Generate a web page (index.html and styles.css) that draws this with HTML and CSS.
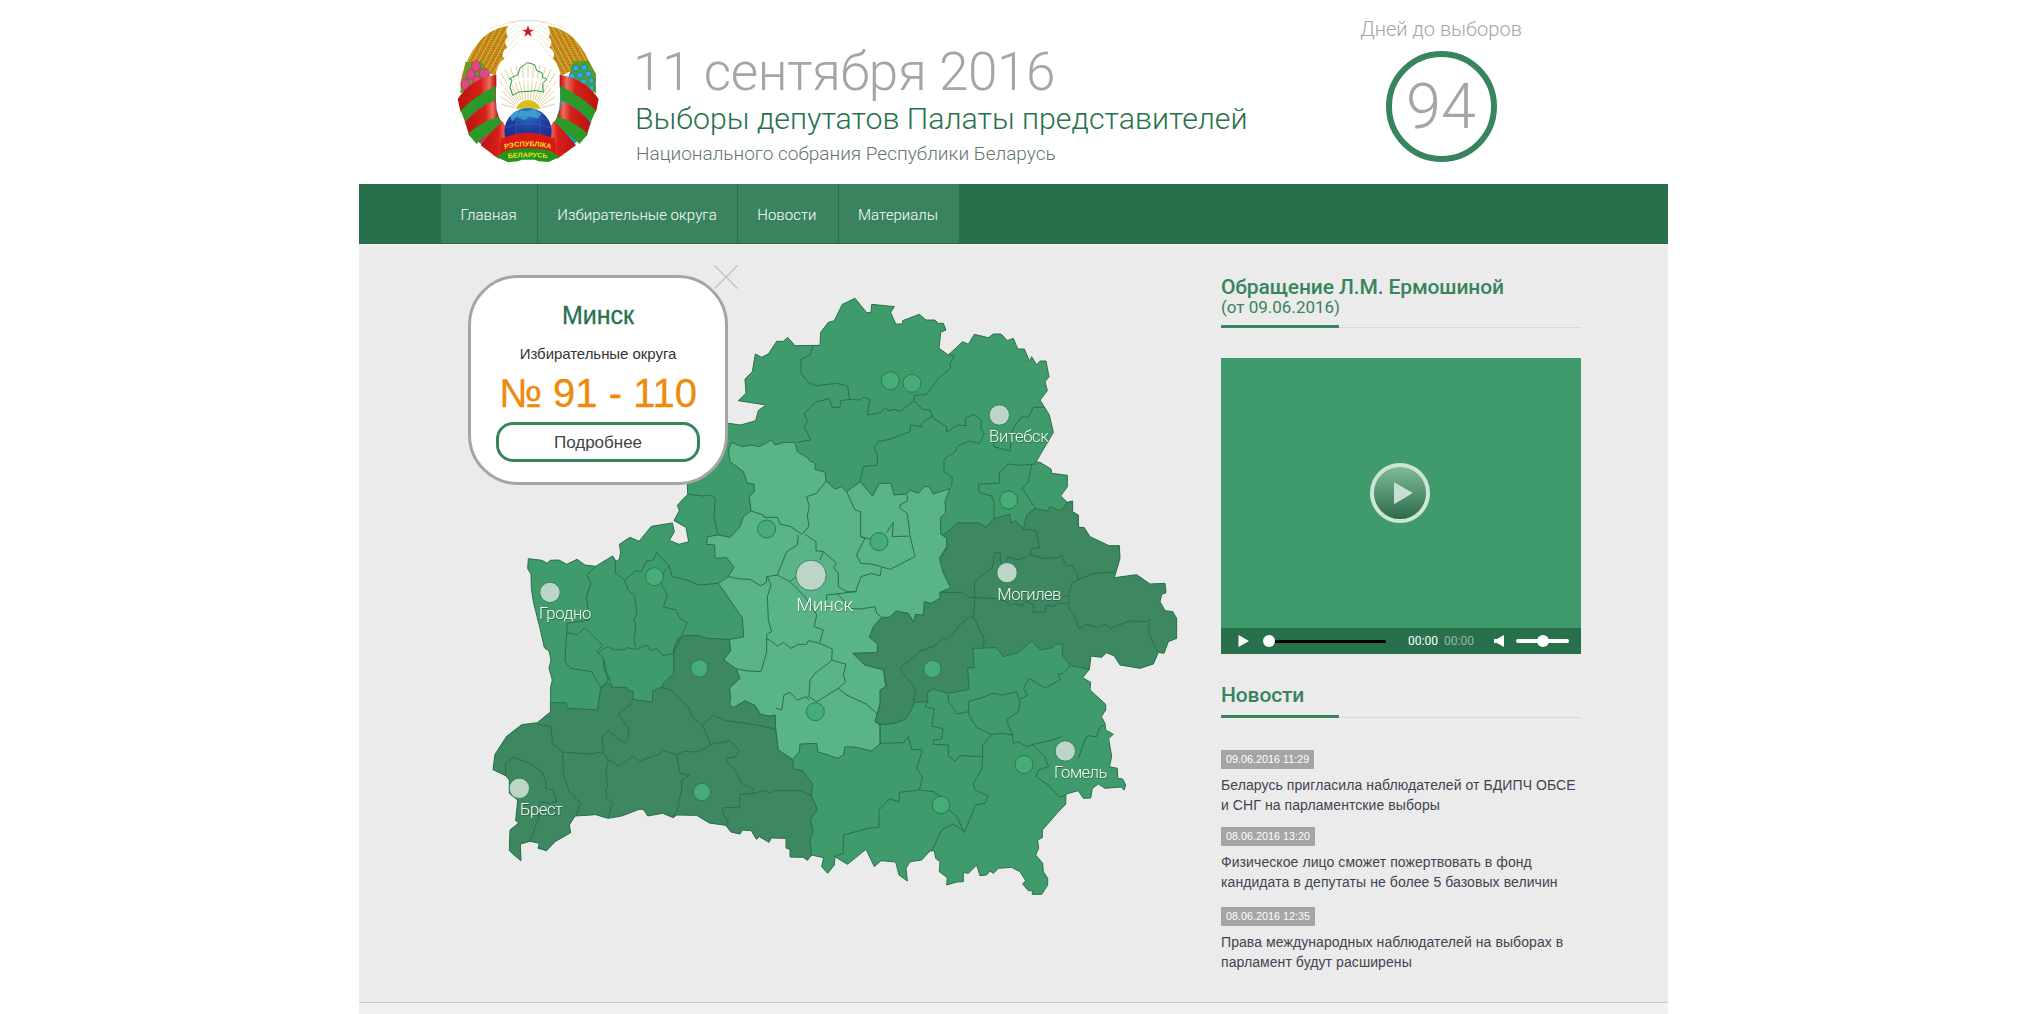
FILE: index.html
```html
<!DOCTYPE html>
<html lang="ru">
<head>
<meta charset="utf-8">
<title>Выборы депутатов Палаты представителей</title>
<link rel="stylesheet" href="styles.css">
</head>
<body>
<div class="page">
  <header class="header">
    <svg class="emblem" viewBox="48 54 432 438" aria-hidden="true">
      <defs>
        <linearGradient id="red" x1="0" x2="1"><stop offset="0" stop-color="#b8140f"/><stop offset=".6" stop-color="#d8201a"/><stop offset=".82" stop-color="#e8705e"/><stop offset="1" stop-color="#b80d0a"/></linearGradient>
        <linearGradient id="red2" x1="1" x2="0"><stop offset="0" stop-color="#b8140f"/><stop offset=".6" stop-color="#d8201a"/><stop offset=".82" stop-color="#e8705e"/><stop offset="1" stop-color="#b80d0a"/></linearGradient>
        <radialGradient id="globe" cx=".5" cy=".1" r=".9"><stop offset="0" stop-color="#2a80c0"/><stop offset=".4" stop-color="#1d3fa0"/><stop offset="1" stop-color="#2a1a80"/></radialGradient>
        <pattern id="wheat" width="14" height="16" patternUnits="userSpaceOnUse" patternTransform="rotate(28)"><rect width="14" height="16" fill="#cf961c"/><path d="M0 0L7 8L14 0M0 8L7 16L14 8" fill="none" stroke="#a0640a" stroke-width="2.4"/><path d="M7 0V16" stroke="#ecc558" stroke-width="2"/></pattern>
        <pattern id="wheat2" width="14" height="16" patternUnits="userSpaceOnUse" patternTransform="rotate(-28)"><rect width="14" height="16" fill="#cf961c"/><path d="M0 0L7 8L14 0M0 8L7 16L14 8" fill="none" stroke="#a0640a" stroke-width="2.4"/><path d="M7 0V16" stroke="#ecc558" stroke-width="2"/></pattern>
        <clipPath id="globe-clip"><circle cx="264" cy="395" r="71"/></clipPath>
        <path id="motto-top" d="M194 447Q264 430 336 447"/>
        <path id="motto-bottom" d="M204 475Q264 468 326 475"/>
      </defs>
      <g fill="none" stroke="#ddd6b0" stroke-width="1.6">
        <path d="M150 86Q264 36 378 86M206 70Q264 55 322 70M205 92L235 72M200 108L238 80M202 124L240 92M204 140L238 104M190 180L236 122M324 92L294 72M328 108L290 80M328 124L288 92M326 140L292 104M340 180L294 122"/>
      </g>
      <g stroke="#dcd39c" stroke-width="3" stroke-dasharray="58 8 40 200">
        <path d="M264 300V155M257 300L243 156M271 300L285 156M250 300L221 164M278 300L307 164M244 302L203 178M284 302L325 178M238 304L190 196M290 304L338 196M234 306L182 218M294 306L346 218M230 310L178 242M298 310L350 242M227 314L180 266M301 314L348 266M225 318L182 290M303 318L346 290M223 323L184 312M305 323L344 312"/>
      </g>
      <path d="M104 188L60 266Q62 222 82 182Q100 142 130 112Q162 82 206 78Q192 92 204 112Q188 126 202 142Q180 158 192 176Q172 190 166 228L140 215Z" fill="url(#wheat)"/>
      <path d="M424 188L468 266Q466 222 446 182Q428 142 398 112Q366 82 322 78Q336 92 326 112Q342 126 328 142Q350 158 338 176Q356 190 362 228L388 215Z" fill="url(#wheat2)"/>
      <path d="M76 186L124 182L150 226L120 262L60 280Z" fill="#6f9a22"/>
      <path d="M398 184L446 182L468 222L468 280L384 240Z" fill="#5f9a28"/>
      <g fill="#dc4a86" stroke="#b52765" stroke-width="2">
        <ellipse cx="108" cy="199" rx="13" ry="17"/><ellipse cx="133" cy="221" rx="15" ry="15"/><ellipse cx="92" cy="223" rx="12" ry="15"/><ellipse cx="110" cy="242" rx="13" ry="14"/><ellipse cx="76" cy="252" rx="12" ry="17"/>
      </g>
      <g fill="#28b4d8" stroke="#0c7ca8" stroke-width="2">
        <circle cx="408" cy="205" r="9"/><circle cx="432" cy="203" r="9"/><circle cx="396" cy="228" r="9"/><circle cx="420" cy="226" r="9"/><circle cx="445" cy="222" r="9"/><circle cx="430" cy="246" r="9"/><circle cx="454" cy="242" r="8"/><circle cx="454" cy="264" r="8"/><circle cx="408" cy="243" r="7"/>
      </g>
      <path d="M58 296L168 232V300Q166 352 206 402L166 470L92 404Q64 350 58 296Z" fill="#b23d5a"/>
      <path d="M472 296L360 232V300Q360 352 322 402L364 468L438 400Q464 350 472 296Z" fill="#1c9ab0"/>
      <path d="M53 298Q90 236 169 224V262Q100 300 62 336Z" fill="url(#red)"/>
      <path d="M62 332Q96 294 166 258V300Q112 320 76 364Z" fill="#2a9a28"/>
      <path d="M76 368Q108 326 162 302Q168 330 176 352Q120 372 88 408Z" fill="url(#red)"/>
      <path d="M84 402Q120 366 176 350Q186 366 192 378Q136 398 110 432Z" fill="#2a9a28"/>
      <path d="M122 436Q150 398 186 362L212 404L190 450L176 476Z" fill="url(#red)"/>
      <path d="M476 298Q438 236 359 224V262Q428 300 468 336Z" fill="url(#red2)"/>
      <path d="M468 332Q432 294 362 258V300Q416 320 452 364Z" fill="#2a9a28"/>
      <path d="M452 368Q420 326 366 302Q360 330 352 352Q408 372 440 408Z" fill="url(#red2)"/>
      <path d="M444 402Q408 366 352 350Q344 366 336 378Q392 398 418 432Z" fill="#2a9a28"/>
      <path d="M408 436Q378 398 342 362L316 404L338 450L352 476Z" fill="url(#red2)"/>
      <path d="M227 326Q240 300 264 300Q290 300 302 326Z" fill="#d6c020"/>
      <circle cx="264" cy="395" r="71" fill="url(#globe)"/>
      <g clip-path="url(#globe-clip)"><path d="M210 345L236 330L262 334L282 326L304 342L294 356L268 350L254 360L230 352L216 364Z" fill="#3c9ccc"/><path d="M192 385Q264 355 336 385M192 365Q264 335 336 365M240 324Q225 365 228 410M288 324Q304 365 300 410" fill="none" stroke="#4a68c0" stroke-width="1.5"/></g>
      <path d="M184 416Q264 380 344 416L350 470Q264 424 178 470Z" fill="#d81a12"/>
      <path d="M168 470L198 452Q264 438 330 452L360 470L326 486L296 484L284 479H246L234 484L204 487Z" fill="#23941f"/>
      <g fill="#f0e020" font-family="Liberation Sans, sans-serif" font-weight="700">
        <text font-size="21"><textPath href="#motto-top" textLength="140" lengthAdjust="spacingAndGlyphs">РЭСПУБЛІКА</textPath></text>
        <text font-size="20"><textPath href="#motto-bottom" textLength="118" lengthAdjust="spacingAndGlyphs">БЕЛАРУСЬ</textPath></text>
      </g>
      <path d="M264 76L268.500 89H282L271 97L275 110L264 102L253 110L257 97L246 89H259.500Z" fill="#d4141c"/>
      <path d="M218 286L210 262L216 240L208 236L234 224L240 204L262 188L284 194L290 212L306 218L308 232L320 238L308 250L310 276L290 272L236 276Z" fill="none" stroke="#2c9a48" stroke-width="3"/>
    </svg>
    <div class="titles">
      <div class="date">11 сентября 2016</div>
      <h1 class="title">Выборы депутатов Палаты представителей</h1>
      <div class="subtitle">Национального собрания Республики Беларусь</div>
    </div>
    <div class="countdown">
      <div class="countdown-label">Дней до выборов</div>
      <div class="countdown-ring">94</div>
    </div>
  </header>

  <nav class="nav">
    <a class="nav-item">Главная</a>
    <a class="nav-item">Избирательные округа</a>
    <a class="nav-item">Новости</a>
    <a class="nav-item">Материалы</a>
  </nav>

  <main class="content">
    <section class="map-area">
      <svg class="map" viewBox="0 0 2160 1890">
        <defs>
          <path id="country" d="M622 612L623 643L592 676L598 692L582 722L618 742L626 785L597 793L568 781L583 755L577 729L514 739L477 784L450 772L418 793L422 816L418 838L408 844L398 828L347 859L315 855L291 838L260 853L237 840L210 841L202 850L186 841L145 836L143 866L153 882L154 925L160 965L180 1045L193 1103L207 1113L213 1140L207 1165L217 1200L212 1220L211 1296L172 1328L125 1334L80 1369L45 1423L39 1469L77 1487L88 1500L88 1540L113 1560L107 1622L117 1628L90 1650L88 1712L123 1743L121 1692L150 1684L178 1690L174 1705L200 1712L225 1685L272 1658L268 1635L285 1608L347 1604L384 1615L425 1608L480 1587L492 1590L503 1608L548 1600L580 1613L590 1605L650 1606L688 1629L737 1636L753 1656L780 1662L787 1650L814 1652L829 1678L838 1670L867 1687L874 1674L918 1675L918 1704L930 1708L930 1731L970 1732L982 1741L995 1725L1031 1733L1025 1760L1043 1780L1063 1755L1065 1730L1102 1753L1158 1708L1183 1760L1203 1742L1247 1746L1257 1785L1282 1803L1278 1765L1290 1745L1325 1740L1350 1713L1363 1712L1367 1735L1380 1745L1378 1775L1402 1793L1400 1815L1430 1806L1450 1805L1450 1777L1465 1780L1490 1755L1500 1787L1520 1785L1530 1773L1540 1780L1555 1765L1595 1762L1620 1775L1637 1802L1628 1812L1645 1832L1657 1832L1657 1843L1685 1843L1703 1815L1703 1795L1690 1775L1688 1750L1667 1725L1676 1705L1673 1680L1687 1673L1687 1650L1735 1595L1757 1573L1758 1542L1795 1532L1810 1555L1832 1554L1837 1525L1855 1512L1875 1525L1925 1521L1932 1530L1937 1515L1928 1497L1913 1495L1912 1465L1888 1460L1895 1430L1886 1375L1900 1363L1877 1350L1875 1330L1864 1310L1877 1290L1877 1273L1830 1230L1832 1207L1808 1193L1828 1168L1833 1128L1865 1132L1880 1118L1903 1128L1920 1155L1980 1165L2020 1152L2035 1117L2052 1120L2065 1085L2090 1075L2090 1015L2078 995L2055 992L2040 965L2045 943L2058 938L2055 910L2010 912L1970 884L1903 893L1920 835L1918 797L1887 797L1830 770L1812 742L1796 742L1795 705L1778 695L1778 663L1762 667L1742 648L1762 620L1762 586L1715 580L1713 567L1680 547L1668 546L1720 457L1708 405L1680 360L1702 332L1695 305L1707 290L1698 243L1680 243L1670 255L1655 230L1648 243L1633 207L1613 207L1600 175L1582 182L1563 162L1540 162L1525 173L1483 163L1465 193L1448 185L1405 225L1377 205L1382 157L1398 150L1390 130L1375 130L1365 120L1338 120L1318 103L1268 122L1267 132L1247 132L1232 97L1243 80L1175 73L1173 97L1160 98L1125 55L1087 73L1063 122L1045 127L1022 157L1020 196L945 197L923 172L910 184L890 184L865 222L845 232L826 222L817 275L795 297L798 340L775 362L858 375L835 392L827 422L782 435L745 430L660 470L625 560Z"/>
          <clipPath id="country-clip"><use href="#country"/></clipPath>
        </defs>
        <use href="#country" class="land"/>
        <g clip-path="url(#country-clip)">
          <path class="region-dark" transform="translate(0 600)" d="M0 668H258L262 684L353 690L362 625L383 608L397 622H440L446 634H460L458 658L517 667L518 632L545 622L552 608L581 582V508L592 478L612 467L650 466L682 475L748 478L752 512L731 540L768 566L780 595L749 624L752 655L760 683L795 662L825 676L842 703L868 708L886 706V745L897 810L938 838L940 866L968 872L998 912L993 945L1012 988L991 1020L1000 1052L990 1080L995 1125V1200H0Z"/>
          <path class="region-dark" transform="translate(960 840)" d="M422 -75L438 -80L475 -113L510 -110L535 -113L558 -98L582 -124L628 -137L635 -110L647 -118L670 -93L680 -135L705 -155L740 -147L750 -160L782 -147L802 -173L818 -177L1200 -177V328H868L810 317L787 285V252H763L757 263L722 270L695 243L655 278L610 290L590 263L518 265L523 323H503L507 388L445 400L400 387L383 397V425L345 427L322 472Q295 495 240 493L225 485L240 430V390L260 377L250 330L195 315L158 280L232 277V252L208 232L220 200L245 172L268 172L288 153L325 160L340 185L347 163L370 165L373 125L393 130L420 115V97L450 83L433 50L428 30L415 0L435 -25L442 -40Z"/>
          <path class="region-light" transform="translate(630 450)" d="M125 37L155 50L185 45L207 50L245 30L255 45L282 37H315L322 65L355 85L358 92L375 100V118L405 127L408 153L435 177L455 170L470 185L510 155L548 198L568 160H603L612 195L650 192L660 180L685 190L702 170H718L730 192L780 175L765 215L767 250L752 262V312L770 325V350L748 385L760 430L782 473L750 487V505L723 520L703 515L700 555L677 553L670 575L655 550L618 543L598 562H575L550 590L538 622L562 642V667L488 670L525 705L580 720L587 770L570 780V820L555 875L570 885L571 940L545 963L500 952L465 950L460 975L443 985L383 965L380 940L330 942L328 965L308 988L265 960L257 895L256 855L238 858L212 853L195 826L165 812L130 833L119 823L122 805L119 774L150 745L138 716L101 690L122 662L118 628L161 621L157 565L120 510L85 460L115 440L132 412L110 383L75 385L74 345L50 343L52 320L85 315L120 322L150 290L160 260L183 243L178 200L193 185L192 162L172 160L160 125L120 95L115 60Z"/>
          <g class="borders">
            <path transform="translate(0 600)" d="M622 43L670 48L695 45L706 55L702 115L715 163M347 260L320 285L333 310L319 350L328 420L262 430L260 457M398 230L406 245V278L434 300L470 272L483 276L500 243L520 240L530 218L567 257L577 290L620 300L655 315L715 310M567 257L550 278L543 310L562 345L550 380L588 390L600 417L622 428L600 478L581 520L548 527L530 505L513 512L500 495L467 508L440 503L432 510L400 508L385 500L368 508L355 520M434 300L445 332L463 345L471 400L460 420L468 430L462 480L468 503M260 457L290 465L315 443L368 497L350 515L372 535L370 560L385 600L362 622L335 575L272 565L255 545ZM372 540L378 570L397 622M172 732L213 740L217 790L248 816L330 822L368 816L385 840L417 858L460 828L478 843L543 820L545 810L590 825L610 814L650 816L693 795L667 735L637 712L625 680L575 632L545 622M460 665L415 703L447 745L443 780L432 788L385 753L367 768L370 816M667 735L700 706L740 722L830 735L886 747M693 793L750 782L778 812L768 830L738 835L745 852L765 868L783 910L818 925L820 940L850 932L875 940L885 932H960L995 948M818 940L780 943L778 983H727L733 1012L745 1018L740 1037M248 816L250 880L268 935L302 970L287 1008M385 840L378 880L383 920L377 925L380 955L398 968L385 1012M590 825L600 880L630 886L605 900V930L595 970L598 975L580 1013M77 887V850L100 832L145 848L185 875L197 900V925L220 932L230 965L210 970L180 965V1000L160 1060L150 1084"/>
            <path transform="translate(720 0)" d="M280 198L270 225L243 238V280L265 308L290 317L350 310L383 318L388 358L362 362L360 382H336L328 355L285 367L252 402L263 425L253 440L272 480L232 487M388 358L420 360L430 352L450 358L442 405L482 398L497 382L505 392L525 388L540 395L582 362L583 347L620 343L655 295L692 265L690 250L703 230L685 222M582 362L607 388L630 390L640 415L680 440V457L712 435L738 437L735 415L763 403L783 420V445L793 462L778 490L745 483L712 500L705 515L672 537V575L697 592L695 620M637 408L605 430V440L572 435L570 455L508 478L475 485L462 505L472 520V555L430 560L420 605M820 487L822 500L870 513L877 450L905 410L925 412L940 382H972M948 552L900 556L865 552L838 580V610L775 612L777 637L815 648L822 665V717M935 555L925 605L907 625L945 683"/>
            <path transform="translate(1350 360)" d="M280 387L318 392L328 443L303 447L302 465L340 475L385 473L395 467L407 497L425 495L443 520V540L490 520L553 517M302 465L265 480L232 470L230 485M212 490L210 458L195 458L187 503L133 545L135 595L130 650L163 718L160 740M32 577H100L115 592L195 595L230 605L240 618L255 610L275 618L285 605L310 612V637H345L350 615L370 620L380 610L413 610M400 588L415 590M443 540L425 550L415 590L418 630L433 645L447 687L470 673L500 683L525 673L540 685L600 663L650 665L660 657L655 700L685 757"/>
            <path transform="translate(960 840)" d="M520 170L500 175L440 240L430 235L400 260L360 273L300 325L347 388L340 425M445 400V425L472 462L505 455M505 425L540 415L580 400L610 405L650 395L660 430L655 455L620 480L637 525L605 520L575 523L530 503L507 465ZM660 418L683 405L670 385L688 355L735 385L780 360L775 343L790 340L810 317M637 525L640 550L655 545L680 560L705 552L745 543L785 530M698 553L735 590L745 620L715 630L708 650L745 675L780 712L798 705M835 597L850 550L862 527L890 530L900 500L915 495M383 425L375 440L403 447L395 498L430 507L425 537L400 540V553L445 555V587L465 603L480 587L548 590V555L575 523M548 590L545 630L520 670L525 690L565 708L555 730L527 735L493 818L470 768L440 745M240 493V550L310 548L325 530L335 568L367 570L350 625L367 650L358 690L298 697V725L268 717L237 750V802L205 805L130 825V880L103 890M358 690L400 695L440 720M395 873L425 810L460 792L493 815"/>
            <path transform="translate(630 450)" d="M183 243L220 255L222 262H262L270 282L303 290L335 313L357 290L352 255L358 230L350 200L380 190L408 153M325 315L322 345L290 365L262 435L230 440L229 458L212 467L180 448L150 447L115 440M232 440L243 465L232 500L235 570L245 605L230 613V665L213 725L165 722L138 716M230 625L263 648L280 637L303 655L325 643H350L355 632L390 640L427 657L425 690L468 703L460 735L467 755L445 775L380 815L357 800L360 750L375 730L425 692M262 435L300 455L345 500L380 555L373 590L400 600L390 637M345 313L378 335V362L400 365L440 400L430 412L445 430V470L470 485L500 485M400 365L390 390M300 455L318 440M470 185L495 240L512 245V320L525 325L500 375L512 400L545 402L600 418L675 380L660 317L652 250L630 235V225L652 212V195M512 320L545 328M590 308L610 277L607 320L657 318M410 510V495L497 485L513 440L545 430L570 438L575 412M440 490L460 510L480 535L510 537L555 530L560 550L575 562M257 835L275 840L282 795L300 787L322 810L350 800L357 812M445 775L470 795L530 823L555 845L560 850"/>
          </g>
        </g>
        <use href="#country" class="coast"/>
        <g class="town">
          <circle cx="860" cy="747" r="27"/><circle cx="523" cy="890" r="27"/><circle cx="658" cy="1165" r="26"/><circle cx="1006" cy="1295" r="27"/><circle cx="666" cy="1536" r="26"/><circle cx="1231" cy="302" r="27"/><circle cx="1296" cy="310" r="27"/><circle cx="1586" cy="660" r="27"/><circle cx="1197" cy="785" r="27"/><circle cx="1357" cy="1167" r="26"/><circle cx="1632" cy="1454" r="27"/><circle cx="1383" cy="1575" r="26"/>
        </g>
        <g class="city">
          <circle cx="210" cy="937" r="30.500"/><circle cx="118" cy="1525" r="30.500"/><circle cx="1558" cy="405" r="30.500"/><circle cx="1581" cy="878" r="30.500"/><circle cx="1756" cy="1413" r="30.500"/><circle cx="993" cy="886" r="45.500"/>
        </g>
        <g class="city-name">
          <text x="177" y="1017" textLength="157">Гродно</text>
          <text x="120" y="1605" textLength="129">Брест</text>
          <text x="1527" y="486" textLength="180">Витебск</text>
          <text x="1552" y="960" textLength="192">Могилев</text>
          <text x="1722" y="1494" textLength="160">Гомель</text>
          <text class="capital" x="949" y="993" textLength="171">Минск</text>
        </g>
      </svg>
      <div class="popup">
        <div class="popup-city">Минск</div>
        <div class="popup-label">Избирательные округа</div>
        <div class="popup-range">№ 91 - 110</div>
        <a class="popup-more">Подробнее</a>
        <svg class="popup-close" viewBox="0 0 24 24"><path d="M.5.5L23.500 23.500M23.500.5L.5 23.500"/></svg>
      </div>
    </section>

    <aside class="sidebar">
      <div class="side-head">
        <h2 class="side-title">Обращение Л.М. Ермошиной</h2>
        <div class="side-date">(от 09.06.2016)</div>
      </div>
      <div class="player">
        <div class="screen">
          <svg class="big-play" viewBox="0 0 60 60">
            <defs><linearGradient id="play" x1="0" y1="0" x2="0" y2="1"><stop offset="0" stop-color="#80bd9b"/><stop offset="1" stop-color="#2a6847"/></linearGradient></defs>
            <circle cx="30" cy="30" r="28" fill="url(#play)" stroke="#cce5d6" stroke-width="4"/>
            <path d="M24.500 20L42 30L24.500 40.500Z" fill="#c6dfd1" stroke="#c6dfd1" stroke-linejoin="round"/>
          </svg>
        </div>
        <div class="controls">
          <svg class="play-icon" viewBox="0 0 11 12"><path d="M.5 0L11 6L.5 12Z"/></svg>
          <div class="track"><span class="knob"></span></div>
          <span class="time">00:00</span>
          <span class="time time-total">00:00</span>
          <svg class="sound-icon" viewBox="0 0 10 12"><path d="M0 4H3L10 0V12L3 8H0Z"/></svg>
          <div class="volume"><span class="knob"></span></div>
        </div>
      </div>
      <div class="side-head side-head-news"><h2 class="side-title">Новости</h2></div>
      <article class="news">
        <time class="stamp">09.06.2016 11:29</time>
        <p class="news-text">Беларусь пригласила наблюдателей от БДИПЧ ОБСЕ<br>и СНГ на парламентские выборы</p>
      </article>
      <article class="news">
        <time class="stamp">08.06.2016 13:20</time>
        <p class="news-text">Физическое лицо сможет пожертвовать в фонд<br>кандидата в депутаты не более 5 базовых величин</p>
      </article>
      <article class="news">
        <time class="stamp">08.06.2016 12:35</time>
        <p class="news-text">Права международных наблюдателей на выборах в<br>парламент будут расширены</p>
      </article>
    </aside>
  </main>
  <footer class="footer"></footer>
</div>
</body>
</html>
```
FILE: styles.css
```css
* { box-sizing: border-box; }
body { margin: 0; background: #fff; font-family: Roboto, sans-serif; }
h1, h2, p { margin: 0; font-weight: inherit; }
.page { width: 1309px; height: 1014px; margin-left: 359px; display: flex; flex-direction: column; overflow: hidden; }

.header { height: 184px; flex: none; display: flex; align-items: flex-start; padding-left: 97px; }
.emblem { width: 144px; height: 146px; margin-top: 18px; }
.titles { width: 680px; margin-left: 35px; padding-top: 42px; white-space: nowrap; color: #a5a5a5; font-weight: 300; }
.date { font-size: 53px; line-height: 60px; letter-spacing: -.35px; margin-left: -2px; }
.title { font-size: 30.3px; line-height: 34px; color: #28704c; }
.subtitle { font-size: 19px; line-height: 36px; color: #66756d; padding-left: 1px; }
.countdown { margin-left: 26px; width: 200px; display: flex; flex-direction: column; align-items: center; padding-top: 17px; color: #a5a5a5; font-weight: 300; }
.countdown-label { font-size: 20px; line-height: 24px; white-space: nowrap; }
.countdown-ring { width: 111px; height: 111px; margin-top: 10px; border: 6px solid #37845d; border-radius: 50%; font-size: 63px; line-height: 99px; text-align: center; }

.nav { height: 60px; flex: none; background: #28704c; display: flex; padding-left: 82px; border-bottom: 1px solid #246745; }
.nav-item { background: #39845e; color: #fff; font-size: 15px; font-weight: 300; line-height: 62px; padding: 0 20px 0 19.5px; letter-spacing: .03px; border-right: 1px solid #28704c; }
.nav-item:nth-child(n+3) { padding-right: 21px; }
.nav-item:last-child { border-right: 0; }

.content { height: 758px; flex: none; background: #ebebeb; display: flex; border-top: 1px solid #f3f3f3; }
.map-area { position: relative; width: 862px; flex: none; padding: 35px 0 0 121px; }
.map { display: block; width: 720px; height: 630px; }
.land { fill: #3f9b6b; }
.region-dark { fill: #3d8860; stroke: #2a7048; stroke-width: 3; }
.region-light { fill: #59b487; stroke: #2a7048; stroke-width: 3; }
.borders { fill: none; stroke: #2a7048; stroke-width: 3; stroke-linejoin: round; }
.coast { fill: none; stroke: #2a7048; stroke-width: 3; }
.town { fill: #46ac78; stroke: #2c7a50; stroke-width: 3; }
.city { fill: #bbd5c7; stroke: #2c7a50; stroke-width: 2.5; }
.city-name { fill: #fff; font-size: 50px; font-weight: 300; font-family: Roboto, sans-serif; filter: drop-shadow(1px 2px 2px rgba(0, 40, 20, .55)); }
.city-name .capital { font-size: 57px; }

.popup { position: absolute; left: 109px; top: 30px; width: 260px; height: 210px; border: 3px solid #a5a5a5; border-radius: 50px; background: #fff; display: flex; flex-direction: column; align-items: center; font-family: "Liberation Sans", sans-serif; white-space: nowrap; }
.popup-city { margin-top: 23px; font-size: 25px; line-height: 28px; color: #28704c; -webkit-text-stroke: .3px #28704c; }
.popup-label { margin-top: 15px; font-size: 15px; line-height: 20px; color: #333; letter-spacing: -.05px; }
.popup-range { margin-top: 7px; font-size: 40px; line-height: 44px; color: #ed8b0c; -webkit-text-stroke: .3px #ed8b0c; }
.popup-more { margin-top: 7px; width: 204px; height: 40px; border: 3px solid #37845d; border-radius: 17px; font-size: 17px; line-height: 35px; text-align: center; color: #3f4347; }
.popup-close { position: absolute; left: 243px; top: -13px; width: 24px; height: 24px; stroke: #c0c0c0; fill: none; stroke-width: 1.2; }

.sidebar { width: 360px; flex: none; }
.side-head { height: 83px; position: relative; border-bottom: 1px solid #d9d9d9; padding-top: 29px; color: #37845d; }
.side-head::after { content: ""; position: absolute; left: 0; bottom: -1px; width: 118px; height: 3px; background: #37845d; }
.side-title { font-size: 21px; line-height: 26px; font-weight: 500; white-space: nowrap; letter-spacing: -.12px; }
.side-date { font-size: 17px; line-height: 18px; margin-top: -2px; }
.player { margin-top: 30px; }
.screen { height: 270px; background: #3f9b6b; display: flex; align-items: center; justify-content: center; }
.big-play { width: 60px; height: 60px; margin-left: -2px; }
.controls { height: 26px; background: #28704c; display: flex; align-items: center; padding-left: 17px; }
.play-icon { width: 11px; height: 12px; fill: #fff; margin-right: 20px; }
.track { width: 117px; height: 3px; border-radius: 2px; background: #000; display: flex; align-items: center; margin-right: 22px; }
.knob { width: 12px; height: 12px; border-radius: 50%; background: #fff; flex: none; }
.track .knob { margin-left: -6px; }
.time { font-size: 12px; color: #fff; width: 30px; }
.time-total { color: #93b7a5; margin-left: 6px; }
.sound-icon { width: 10px; height: 12px; fill: #fff; margin-left: 20px; margin-right: 12px; }
.volume { width: 53px; height: 4px; border-radius: 2px; background: #fff; display: flex; align-items: center; justify-content: center; }
.side-head-news { height: 64px; padding-top: 28px; margin-bottom: 32px; }
.news { font-family: "Liberation Sans", sans-serif; margin-bottom: 12px; }
.news + .news { margin-bottom: 15px; }
.stamp { display: block; width: max-content; height: 19px; padding: 0 5px; background: #a5a5a5; color: #fff; font-size: 10.8px; line-height: 19px; }
.news-text { margin-top: 6px; font-size: 14px; line-height: 20px; letter-spacing: .08px; color: #3e4450; white-space: nowrap; }
.footer { flex: 1; background: #f1f1f1; border-top: 1px solid #c9c9c9; }
```
